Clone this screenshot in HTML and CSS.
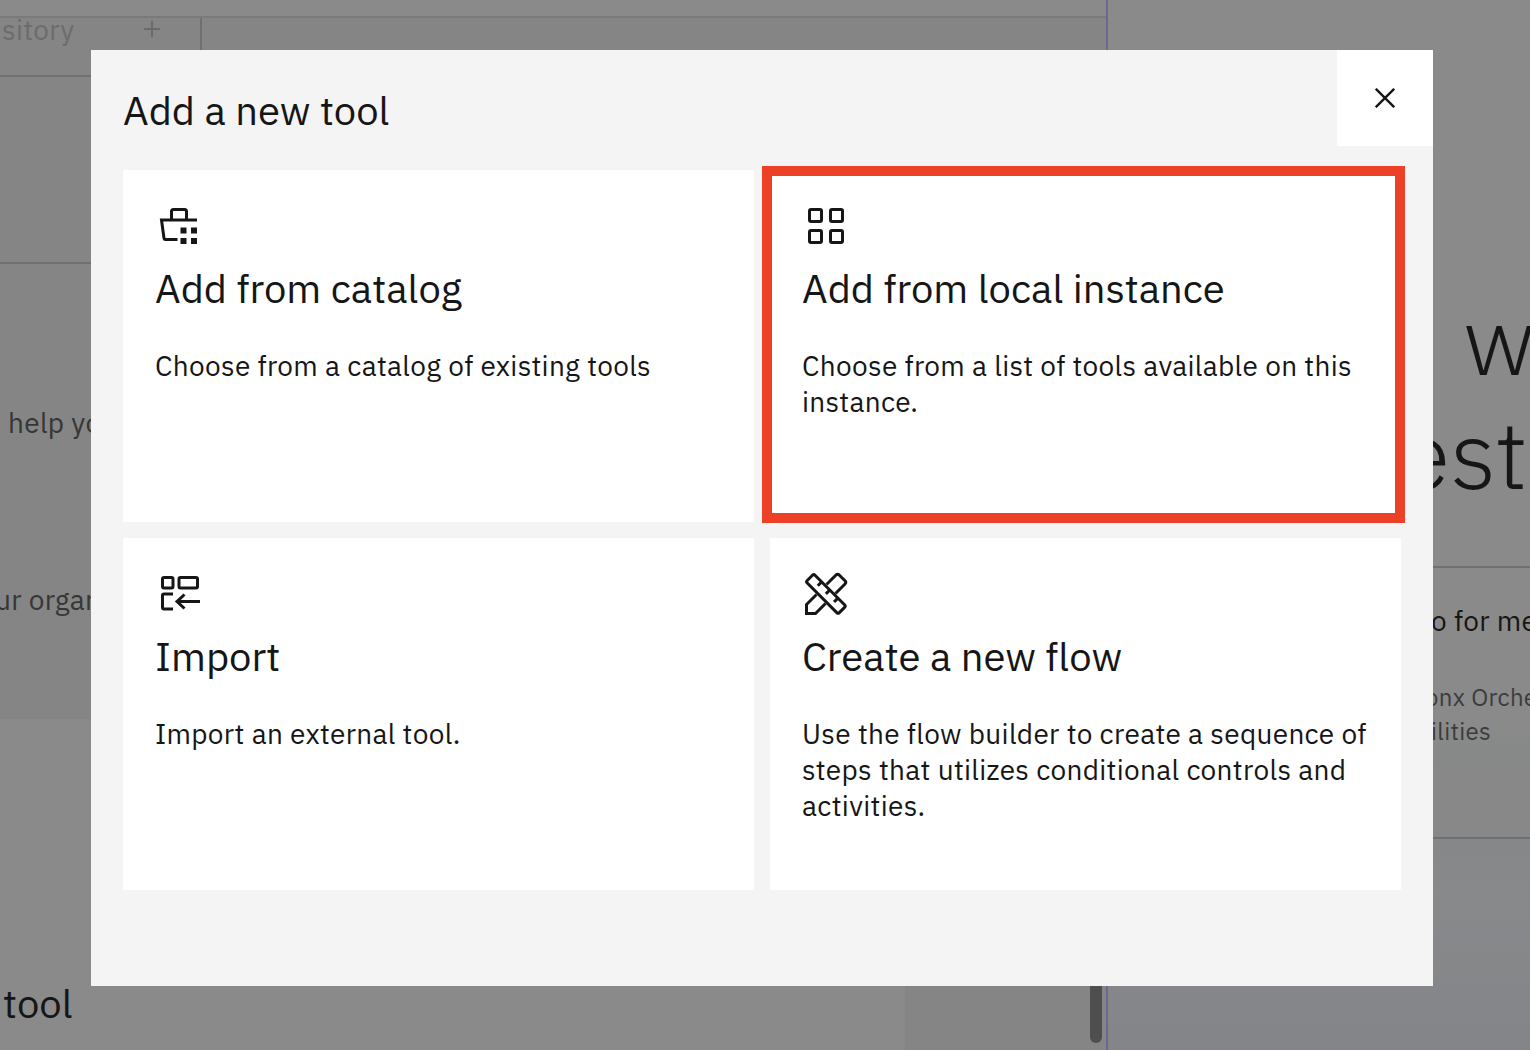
FILE: index.html
```html
<!DOCTYPE html>
<html lang="en">
<head>
<meta charset="utf-8">
<title>Add a new tool</title>
<link rel="stylesheet" href="styles.css">
</head>
<body>
<div class="app">
  <main class="builder">
    <div class="topbar"></div>
    <div class="tabs">
      <div class="tab"><span class="tab-label">sitory</span>
        <svg class="plus" viewBox="0 0 16 16"><path d="M8 0V16M0 8H16"/></svg>
      </div>
    </div>
    <section class="summary"></section>
    <section class="details">
      <p class="help">help yo</p>
      <p class="organ">ur organ</p>
    </section>
    <section class="tools">
      <div class="tools-body"><h2 class="tools-title">tool</h2></div>
      <div class="gutter"><div class="scrollbar"></div></div>
    </section>
  </main>
  <aside class="preview">
    <div class="welcome">w</div>
    <div class="product">est</div>
    <div class="prompt">
      <p class="prompt-title">o for me</p>
      <p class="prompt-text">onx Orche</p>
      <p class="prompt-text second">ilities</p>
    </div>
  </aside>
</div>
<div class="overlay">
  <div class="modal" role="dialog" aria-label="Add a new tool">
    <header class="modal-head">
      <h1 class="modal-title">Add a new tool</h1>
      <button class="close" aria-label="Close"><svg viewBox="0 0 20 20"><path d="M.8 .8L19.2 19.2M19.2 .8L.8 19.2"/></svg></button>
    </header>
    <div class="tiles">
      <article class="tile">
        <svg class="icon" viewBox="0 0 48 48"><path d="M42 18H6.500L9 36.200Q9.200 37.500 10.500 37.500H22.500M16.500 18V9.500Q16.500 7.500 18.500 7.500H29.500Q31.500 7.500 31.500 9.500V18"/><path class="solid" d="M25.500 25.500h6v6h-6zM36 25.500h6v6h-6zM25.500 36h6v6h-6zM36 36h6v6h-6z"/></svg>
        <h3 class="name">Add from catalog</h3>
        <p class="desc">Choose from a catalog of existing tools</p>
      </article>
      <article class="tile selected">
        <svg class="icon" viewBox="0 0 48 48"><rect x="7.500" y="7.500" width="12" height="12" rx="1.500"/><rect x="28.500" y="7.500" width="12" height="12" rx="1.500"/><rect x="7.500" y="28.500" width="12" height="12" rx="1.500"/><rect x="28.500" y="28.500" width="12" height="12" rx="1.500"/></svg>
        <h3 class="name">Add from local instance</h3>
        <p class="desc">Choose from a list of tools available on this instance.</p>
      </article>
      <article class="tile">
        <svg class="icon" viewBox="0 0 48 48"><rect x="7.500" y="7.500" width="10.500" height="10.500" rx="1.500"/><rect x="24" y="7.500" width="18.500" height="10.500" rx="1.500"/><path d="M18 24H9Q7.500 24 7.500 25.500V37.500Q7.500 39 9 39H18M45 31.500H22M29.500 24.500L22 31.500L29.500 38.500"/></svg>
        <h3 class="name">Import</h3>
        <p class="desc">Import an external tool.</p>
      </article>
      <article class="tile">
        <svg class="icon" viewBox="0 0 48 48"><g transform="translate(23.900 23.900) rotate(45)"><rect x="-22.700" y="-5.500" width="45.400" height="11" rx="1.800"/><path d="M-11.500 -5.500V0M0 -5.500V0M11.500 -5.500V0"/></g><path d="M24.500 14.500L34 5Q35.600 3.600 37.200 5L43 10.800Q44.500 12.500 43 14L33.500 23.500M14.500 24.500L4.500 34.500V43.500H13.500L23.500 33.500"/></svg>
        <h3 class="name">Create a new flow</h3>
        <p class="desc">Use the flow builder to create a sequence of steps that utilizes conditional controls and activities.</p>
      </article>
    </div>
  </div>
</div>
</body>
</html>
```
FILE: styles.css
```css
* { box-sizing: border-box; }
body { margin: 0; width: 1530px; height: 1050px; overflow: hidden; font-family: "IBM Plex Sans", Roboto, sans-serif; color: #161616; background: #8a8a8a; }
h1, h2, h3, p { margin: 0; font-weight: 400; }
svg { display: block; fill: none; stroke: #161616; }
.app { display: flex; width: 1530px; height: 1050px; }
.builder { width: 1106px; display: flex; flex-direction: column; }
.topbar { height: 18px; border-bottom: 2px solid #7a7a7a; }
.tabs { height: 59px; display: flex; background: #858585; border-bottom: 2px solid #707070; }
.tab { width: 202px; display: flex; border-right: 2px solid #707070; color: #6c6c6c; }
.tab-label { width: 144px; padding-left: 2px; font-size: 28px; line-height: 24px; letter-spacing: .32px; }
.plus { width: 16px; height: 16px; margin-top: 3px; stroke: #6a6a6a; stroke-width: 2; }
.summary { height: 187px; background: #858585; border-bottom: 2px solid #707070; }
.details { height: 455px; background: #858585; color: #363636; font-size: 28px; line-height: 36px; letter-spacing: .32px; }
.help { padding: 141px 0 0 8px; }
.organ { padding-top: 141px; margin-left: -5px; }
.tools { flex: 1; display: flex; background: #8a8a8a; }
.tools-body { width: 905px; padding: 259px 0 0 3px; }
.tools-title { font-size: 40px; line-height: 50px; }
.gutter { width: 201px; background: #858585; display: flex; justify-content: flex-end; padding: 0 4px 7px 0; }
.scrollbar { width: 12px; border-radius: 6px; background: #4e4e4e; }
.preview { flex: 1; border-left: 2px solid #6c6990; overflow: hidden; background: linear-gradient(#8a8a8a 0 720px, #868988 755px, #888 775px 830px, #858789 850px, #87898b 890px, #838588 1049px); }
.welcome { margin: 282px 0 0 355px; height: 114px; font-size: 96px; line-height: 114px; font-weight: 300; }
.product { padding-left: 290px; height: 170px; font-size: 96px; line-height: 114px; font-weight: 300; }
.prompt { height: 273px; padding: 35px 0 0 323px; border-top: 2px solid #707070; border-bottom: 2px solid #707070; white-space: nowrap; }
.prompt-title { font-size: 28px; line-height: 36px; letter-spacing: .32px; }
.prompt-text { margin: 41px 0 0 -6px; font-size: 24px; line-height: 34px; letter-spacing: .32px; color: #3c3c3c; }
.prompt-text.second { margin: 0 0 0 0; }
.overlay { position: absolute; inset: 0; padding: 50px 97px 64px 91px; }
.modal { height: 936px; background: #f4f4f4; }
.modal-head { height: 120px; display: flex; justify-content: space-between; }
.modal-title { padding: 35px 0 0 32px; font-size: 40px; line-height: 50px; }
.close { width: 96px; height: 96px; padding: 38px; border: 0; background: #fff; }
.close svg { width: 20px; height: 20px; stroke-width: 2.4; }
.tiles { display: grid; grid-template-columns: 631px 631px; grid-auto-rows: 352px; gap: 16px; padding-left: 32px; }
.tile { position: relative; padding: 32px 32px 0 32px; background: #fff; }
.selected::after { content: ""; position: absolute; inset: -4px -4px -1px -8px; border: 10px solid #ec4027; }
.icon { width: 48px; height: 48px; stroke-width: 3; }
.solid { fill: #161616; stroke: none; }
.name { margin-top: 13px; font-size: 40px; line-height: 50px; }
.desc { margin-top: 35px; font-size: 28px; line-height: 36px; letter-spacing: .32px; }
```
